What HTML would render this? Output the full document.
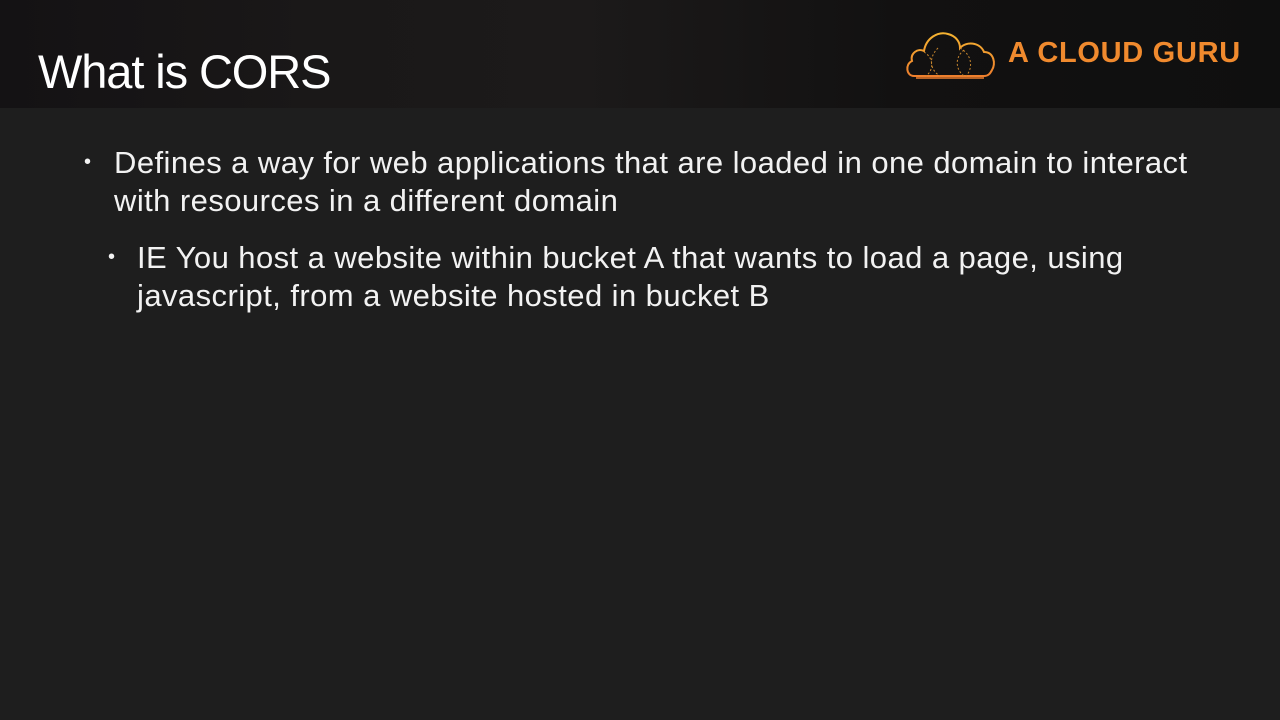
<!DOCTYPE html>
<html><head><style>
body{margin:0;width:1280px;height:720px;background:#1e1e1e;font-family:"Liberation Sans",sans-serif;color:#f2f2f2;overflow:hidden;position:relative}
.hd{position:absolute;left:0;top:0;width:1280px;height:108px;background:linear-gradient(90deg,#141214 0%,#1a1818 25%,#1c1a1a 45%,#121111 70%,#0f0f0f 100%)}
.t{position:absolute;left:38px;top:44px;font-size:47px;color:#fff;white-space:nowrap;letter-spacing:-1.1px}
.logo{position:absolute;left:1008px;top:37px;font-size:29px;font-weight:bold;color:#f08a2e;white-space:nowrap;letter-spacing:0.7px}
.b{position:absolute;font-size:31px;line-height:38px;white-space:nowrap;letter-spacing:0.43px}
.dot{position:absolute;font-size:20px}
</style></head><body>
<div class="hd"></div>
<div class="t">What is CORS</div>
<svg style="position:absolute;left:904px;top:28px" width="94" height="54" viewBox="0 0 94 54">
<defs><linearGradient id="g" x1="0" y1="0" x2="0" y2="1"><stop offset="0" stop-color="#f5b331"/><stop offset="1" stop-color="#ee7f2d"/></linearGradient></defs>
<path d="M10 48 C2 48 1 36 8 33 C6 25 14 20 20 23 C22 10 34 3 44 6 C52 8 56 14 56 20 C62 13 76 14 80 24 C90 24 92 36 88 42 C86 46 84 48 80 48 Z" fill="none" stroke="url(#g)" stroke-width="2"/>
<line x1="12" y1="50" x2="80" y2="50" stroke="#ee7f2d" stroke-width="1.5"/>
<path d="M20 24 C30 30 30 42 22 48 M34 20 C24 30 26 42 36 48 M56 20 C70 28 68 42 62 48 M60 22 C50 30 52 42 60 48" fill="none" stroke="#c8862e" stroke-width="1" stroke-dasharray="2 2"/>
</svg>
<div class="logo">A CLOUD GURU</div>
<div class="dot" style="left:84px;top:151px">•</div>
<div class="b" style="left:114px;top:144px">Defines a way for web applications that are loaded in one domain to interact</div>
<div class="b" style="left:114px;top:182px">with resources in a different domain</div>
<div class="dot" style="left:108px;top:246px">•</div>
<div class="b" style="left:137px;top:239px">IE You host a website within bucket A that wants to load a page, using</div>
<div class="b" style="left:137px;top:277px">javascript, from a website hosted in bucket B</div>
</body></html>
